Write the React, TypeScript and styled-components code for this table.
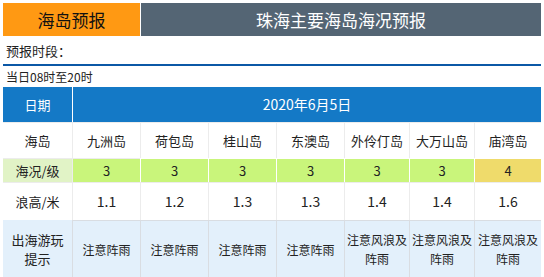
import React from "react";
import styled, { createGlobalStyle } from "styled-components";

const Global = createGlobalStyle`
  html, body { margin: 0; padding: 0; background: #fff; }
  body { font-family: "Noto Sans CJK SC", "Noto Sans", sans-serif; color: #222; }
`;

const Page = styled.div`
  padding: 3px 3px 0 3px;
  width: 538px;
`;

const TopBar = styled.div`
  display: grid;
  grid-template-columns: 137px 400px;
  column-gap: 1px;
  height: 33px;
`;

const TopTab = styled.div<{ $bg: string; $fg: string }>`
  background: ${(p) => p.$bg};
  color: ${(p) => p.$fg};
  display: flex;
  align-items: center;
  justify-content: center;
  font-size: 17px;
  line-height: 1;
`;

const PeriodRow = styled.div`
  height: 28px;
  display: flex;
  align-items: center;
  padding-left: 3px;
  font-size: 13px;
  border-bottom: 2px solid #0b58a6;
`;

const SpanRow = styled.div`
  height: 21px;
  display: flex;
  align-items: center;
  padding-left: 3px;
  font-size: 12px;
`;

const Grid = styled.div`
  display: grid;
  grid-template-columns: 69px 68px 68px 68px 68px 65px 65px 67px;
  grid-template-rows: 35px 36px 24px 38px 57px;
`;

const Cell = styled.div<{
  $bg?: string;
  $line?: string;
  $first?: boolean;
  $top?: boolean;
  $fg?: string;
  $size?: number;
  $span?: number;
}>`
  box-sizing: border-box;
  background: ${(p) => p.$bg || "#fff"};
  color: ${(p) => p.$fg || "#222"};
  border-left: ${(p) => (p.$first ? "none" : `1px solid ${p.$line || "#ececec"}`)};
  border-top: ${(p) => (p.$top ? "none" : `1px solid ${p.$line || "#ececec"}`)};
  grid-column: ${(p) => (p.$span ? `span ${p.$span}` : "auto")};
  display: flex;
  align-items: center;
  justify-content: center;
  text-align: center;
  font-size: ${(p) => p.$size || 13}px;
  line-height: 19px;
  padding: 0 1px;
`;

const islands = ["九洲岛", "荷包岛", "桂山岛", "东澳岛", "外伶仃岛", "大万山岛", "庙湾岛"];
const levels = [3, 3, 3, 3, 3, 3, 4];
const waves = ["1.1", "1.2", "1.3", "1.3", "1.4", "1.4", "1.6"];
const tips = ["注意阵雨", "注意阵雨", "注意阵雨", "注意阵雨", "注意风浪及阵雨", "注意风浪及阵雨", "注意风浪及阵雨"];

export default function App() {
  return (
    <Page>
      <Global />
      <TopBar>
        <TopTab $bg="#ff9913" $fg="#111">海岛预报</TopTab>
        <TopTab $bg="#546574" $fg="#fff">珠海主要海岛海况预报</TopTab>
      </TopBar>
      <PeriodRow>预报时段：</PeriodRow>
      <SpanRow>当日08时至20时</SpanRow>
      <Grid>
        <Cell $first $top $bg="#1479c6" $fg="#fff" $line="#fff">日期</Cell>
        <Cell $top $span={7} $bg="#1479c6" $fg="#fff" $line="#fff" $size={14}>2020年6月5日</Cell>

        <Cell $first $line="#ececec">海岛</Cell>
        {islands.map((n) => (
          <Cell key={n}>{n}</Cell>
        ))}

        <Cell $first $bg="#e1f3c6">海况/级</Cell>
        {levels.map((l, i) => (
          <Cell key={i} $bg={l >= 4 ? "#efdb6b" : "#c9f57b"} $line={i === 0 ? "#ececec" : "#fff"}>
            {l}
          </Cell>
        ))}

        <Cell $first>浪高/米</Cell>
        {waves.map((w, i) => (
          <Cell key={i} $size={14}>{w}</Cell>
        ))}

        <Cell $first $bg="#e3f0fb" $line="#e3f0fb">出海游玩<br />提示</Cell>
        {tips.map((t, i) => (
          <Cell key={i} $bg="#e3f0fb" $line="#d9dde2" $size={12}>{t}</Cell>
        ))}
      </Grid>
    </Page>
  );
}
